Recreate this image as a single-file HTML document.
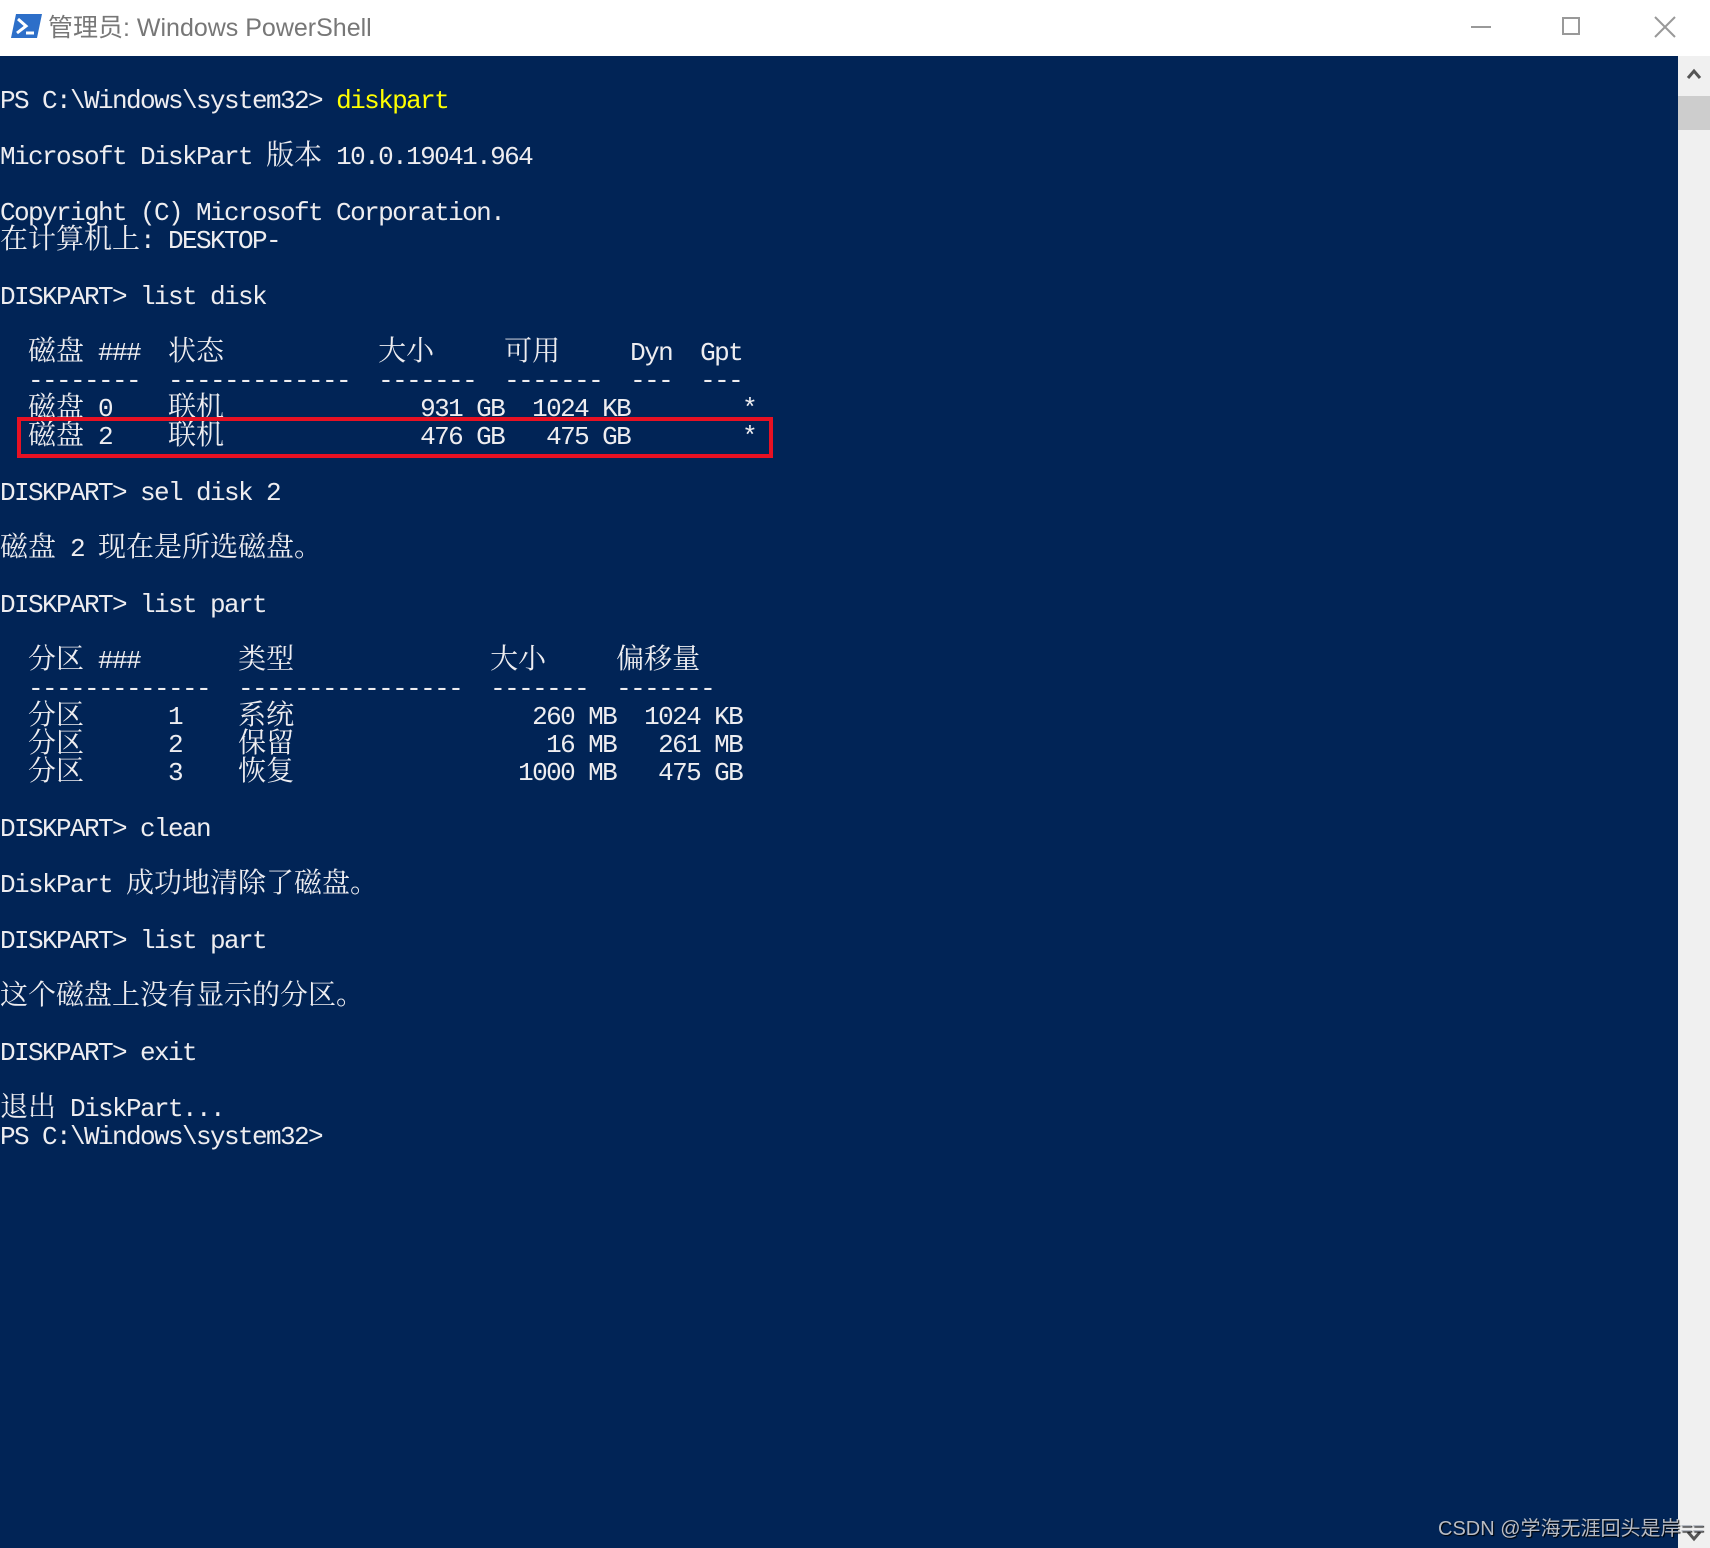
<!DOCTYPE html>
<html><head><meta charset="utf-8">
<style>
html,body{margin:0;padding:0;width:1710px;height:1548px;overflow:hidden;background:#012456;}
#title{position:absolute;left:0;top:0;width:1710px;height:56px;background:#fff;}
#title .t{position:absolute;left:48px;top:8px;font:25px "Liberation Sans","Noto Sans CJK SC",sans-serif;color:#777;}
#con{position:absolute;left:0;top:87px;width:1678px;color:#eeedf0;font-family:"Liberation Mono",monospace;font-size:26px;letter-spacing:-1.6px;line-height:28px;white-space:pre;}
#con .l{height:28px;}
#con b{font-weight:normal;font-family:"Noto Serif CJK SC","Noto Sans CJK SC",serif;font-size:28px;letter-spacing:0;line-height:28px;display:inline-block;height:28px;vertical-align:top;position:relative;top:-4px;}
.y{color:#ffff00;}
#sb{position:absolute;left:1678px;top:56px;width:32px;height:1492px;background:#f0f0f0;}
#thumb{position:absolute;left:1678px;top:96px;width:32px;height:34px;background:#cdcdcd;}
#box{position:absolute;left:17px;top:417px;width:748px;height:33px;border:4px solid #e81123;}
#wm{position:absolute;left:1438px;top:1512px;font:20px "Liberation Sans","Noto Sans CJK SC",sans-serif;color:#b8bcc4;text-shadow:1px 1px 1px #000;white-space:nowrap;}
</style></head><body>
<div id="title">
<svg style="position:absolute;left:11px;top:14px" width="31" height="24" viewBox="0 0 31 24"><polygon points="5,0 31,0 26,24 0,24" fill="#2d6fc9"/><polyline points="7,5 15,12 6,19" fill="none" stroke="#fff" stroke-width="3"/><line x1="15" y1="19" x2="23" y2="19" stroke="#fff" stroke-width="3"/></svg>
<div class="t">管理员: Windows PowerShell</div>
<div style="position:absolute;left:1471px;top:26px;width:20px;height:2px;background:#999"></div>
<div style="position:absolute;left:1562px;top:17px;width:18px;height:18px;border:2px solid #999;box-sizing:border-box"></div>
<svg style="position:absolute;left:1654px;top:16px" width="22" height="22"><path d="M1 1L21 21M21 1L1 21" stroke="#999" stroke-width="2"/></svg>
</div>
<div id="sb"></div><div id="thumb"></div>
<svg style="position:absolute;left:1686px;top:68px" width="16" height="12"><path d="M2 10L8 3L14 10" fill="none" stroke="#555" stroke-width="3"/></svg>
<svg style="position:absolute;left:1686px;top:1530px" width="16" height="12"><path d="M2 2L8 9L14 2" fill="none" stroke="#555" stroke-width="3"/></svg>
<div id="con"><div class="l">PS C:\Windows\system32&gt; <span class="y">diskpart</span></div><div class="l"> </div><div class="l">Microsoft DiskPart <b>版本</b> 10.0.19041.964</div><div class="l"> </div><div class="l">Copyright (C) Microsoft Corporation.</div><div class="l"><b>在计算机上</b>: DESKTOP-</div><div class="l"> </div><div class="l">DISKPART&gt; list disk</div><div class="l"> </div><div class="l">  <b>磁盘</b> ###  <b>状态</b>           <b>大小</b>     <b>可用</b>     Dyn  Gpt</div><div class="l">  --------  -------------  -------  -------  ---  ---</div><div class="l">  <b>磁盘</b> 0    <b>联机</b>              931 GB  1024 KB        *</div><div class="l">  <b>磁盘</b> 2    <b>联机</b>              476 GB   475 GB        *</div><div class="l"> </div><div class="l">DISKPART&gt; sel disk 2</div><div class="l"> </div><div class="l"><b>磁盘</b> 2 <b>现在是所选磁盘。</b></div><div class="l"> </div><div class="l">DISKPART&gt; list part</div><div class="l"> </div><div class="l">  <b>分区</b> ###       <b>类型</b>              <b>大小</b>     <b>偏移量</b></div><div class="l">  -------------  ----------------  -------  -------</div><div class="l">  <b>分区</b>      1    <b>系统</b>                 260 MB  1024 KB</div><div class="l">  <b>分区</b>      2    <b>保留</b>                  16 MB   261 MB</div><div class="l">  <b>分区</b>      3    <b>恢复</b>                1000 MB   475 GB</div><div class="l"> </div><div class="l">DISKPART&gt; clean</div><div class="l"> </div><div class="l">DiskPart <b>成功地清除了磁盘。</b></div><div class="l"> </div><div class="l">DISKPART&gt; list part</div><div class="l"> </div><div class="l"><b>这个磁盘上没有显示的分区。</b></div><div class="l"> </div><div class="l">DISKPART&gt; exit</div><div class="l"> </div><div class="l"><b>退出</b> DiskPart...</div><div class="l">PS C:\Windows\system32&gt;</div></div>
<div id="box"></div>
<div id="wm">CSDN @学海无涯回头是岸==</div>
</body></html>
